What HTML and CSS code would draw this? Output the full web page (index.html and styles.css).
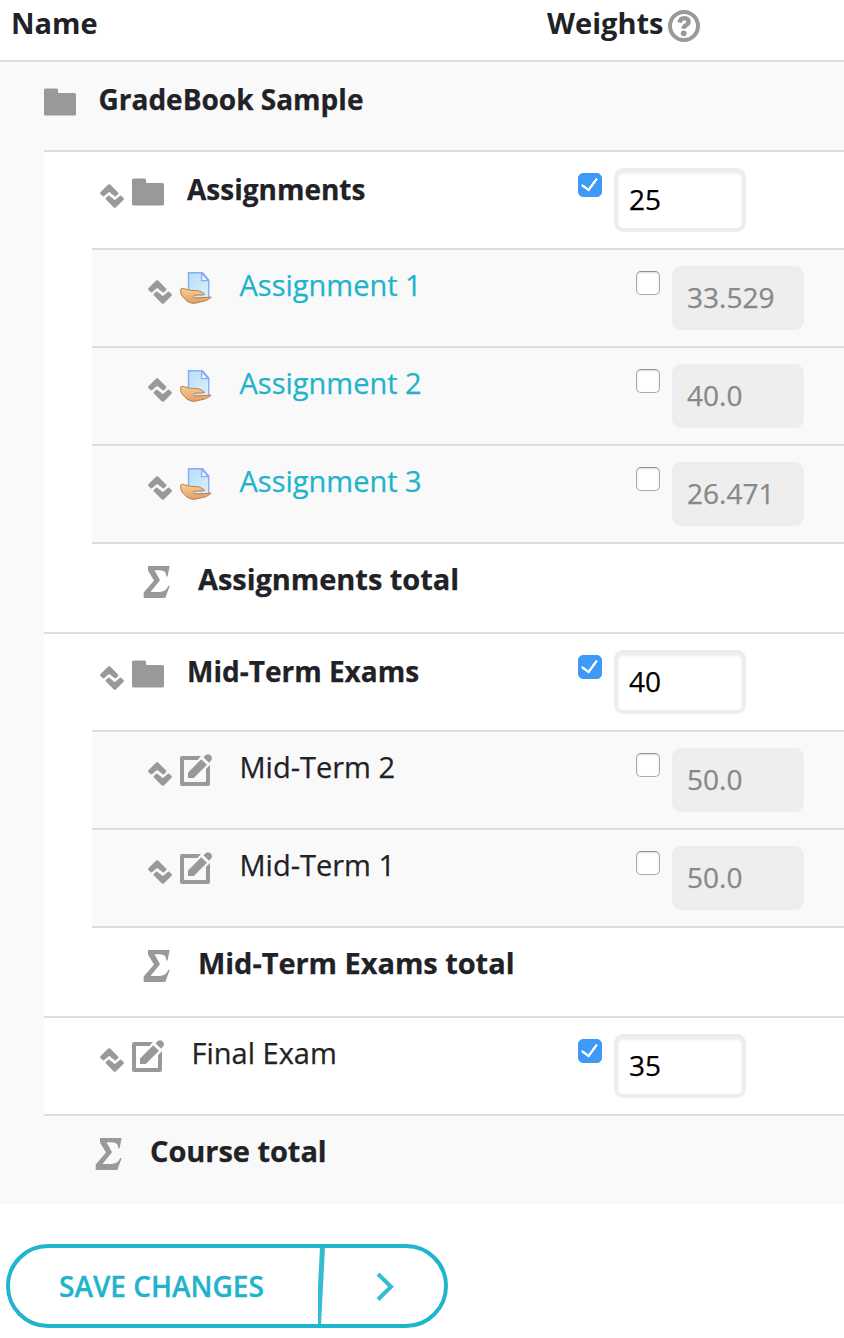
FILE: index.html
```html
<!DOCTYPE html>
<html lang="en">
<head>
<meta charset="utf-8">
<title>Gradebook setup</title>
<link rel="stylesheet" href="styles.css">
</head>
<body>
<svg class="defs" width="0" height="0" aria-hidden="true">
  <defs><linearGradient id="paper" x2="1" y2="1"><stop stop-color="#b9ddf8"/><stop offset="1" stop-color="#d9f1fe"/></linearGradient><linearGradient id="skin" x2="0" y2="1"><stop stop-color="#f8cd99"/><stop offset="1" stop-color="#dea066"/></linearGradient></defs>
  <symbol id="folder" viewBox="0 0 32 28"><path d="M1.500 .5H12.500Q14 .5 14 2V4Q14 5 15 5H30.500Q32 5 32 6.500V26Q32 27.500 30.500 27.500H1.500Q0 27.500 0 26V2Q0 .5 1.500 .5Z"/></symbol>
  <symbol id="move" viewBox="0 0 24 24"><path d="M8.200 .6Q9.200-.3 10.200.6L18.300 8.700Q18.800 9.400 18.200 10.100L16.200 12.100Q15.300 12.800 14.300 12L10 8.400Q9.200 7.700 8.400 8.400L4.400 12Q3.400 12.800 2.500 12L.4 9.900Q-.3 9 .4 8.200Z"/><path d="M15.800 23.400Q14.800 24.300 13.800 23.400L5.700 15.300Q5.200 14.600 5.800 13.900L7.800 11.900Q8.700 11.200 9.700 12L14 15.600Q14.800 16.300 15.600 15.600L19.600 12Q20.600 11.200 21.500 12L23.600 14.100Q24.300 15 23.600 15.800Z"/></symbol>
  <symbol id="edit" viewBox="0 0 32 32"><path d="M2 2H21L17.500 6H5Q4 6 4 7V27Q4 28 5 28H25Q26 28 26 27V15L30 11V30Q30 32 28 32H2Q0 32 0 30V4Q0 2 2 2Z"/><path d="M8 18.500 21.300 5.200 27 10.800 13.800 24H8Z"/><path d="M23.400 3.200 26.200.8Q28-.6 30.500 1.300 33 4 31.200 6.200L29 8.700Z"/></symbol>
  <symbol id="sigma" viewBox="0 0 32 32"><path d="M8 0H29.700L27.500 10.400H26.300Q26.500 4.400 20 4.300H14.500L20 14.200 10.500 26H19.500Q25.500 25.900 28.300 20H29.700L25.300 32H3.700V26.500L14 14.500 8 4.500Z"/></symbol>
  <symbol id="submission" viewBox="0 0 32 32"><path d="M8.500 .7H22.500L28.700 8V26H8.500Z" fill="url(#paper)" stroke="#84aef5" stroke-width="1.400"/><path d="M21.600 1V8.700H28.400Z" fill="#edf8ff" stroke="#84aef5" stroke-width="1.300"/><path d="M.7 17Q2 15.800 4.500 16.800L10.500 18.300 18 18.700Q24 20.600 24.700 22.300 23.500 23.400 17 23.100 13.300 23.200 13 24.500 13.300 25.800 17.500 26.100L31.200 25.100Q29.500 27.500 24 29.200L14 31.400Q11 31.400 7 29.200L2 24Q.2 21.500 .7 17Z" fill="url(#skin)" stroke="#bd8047" stroke-width="1"/></symbol>
  <symbol id="help" viewBox="0 0 32 32"><circle cx="16" cy="16" r="14" fill="none" stroke="currentColor" stroke-width="4"/><path d="M11.600 12.600Q12.200 8.100 16.200 8.100 20.700 8.300 20.600 12 20.400 14 17.700 15.500 15.700 16.500 15.700 18.700" fill="none" stroke="currentColor" stroke-width="4.400"/><circle cx="15.700" cy="23.300" r="2.900"/></symbol>
</svg>

<header class="head">
  <span class="head-name">Name</span>
  <span class="head-weights">Weights</span>
  <svg class="icon help"><use href="#help"/></svg>
</header>

<main class="course">
  <div class="row short course-row">
    <svg class="icon folder"><use href="#folder"/></svg><strong class="label">GradeBook Sample</strong>
  </div>
  <div class="children">
    <section class="category">
      <div class="row parent">
        <svg class="icon move"><use href="#move"/></svg><svg class="icon folder"><use href="#folder"/></svg><strong class="label">Assignments</strong>
        <span class="weights"><input class="check" type="checkbox" checked><input class="value" value="25"></span>
      </div>
      <div class="items">
        <div class="row item"><svg class="icon move"><use href="#move"/></svg><svg class="icon"><use href="#submission"/></svg><a class="label link">Assignment 1</a><span class="weights"><input class="check" type="checkbox"><input class="value" value="33.529" disabled></span></div>
        <div class="row item"><svg class="icon move"><use href="#move"/></svg><svg class="icon"><use href="#submission"/></svg><a class="label link">Assignment 2</a><span class="weights"><input class="check" type="checkbox"><input class="value" value="40.0" disabled></span></div>
        <div class="row item"><svg class="icon move"><use href="#move"/></svg><svg class="icon"><use href="#submission"/></svg><a class="label link">Assignment 3</a><span class="weights"><input class="check" type="checkbox"><input class="value" value="26.471" disabled></span></div>
        <div class="row short total"><svg class="icon"><use href="#sigma"/></svg><strong class="label">Assignments total</strong></div>
      </div>
    </section>
    <section class="category">
      <div class="row parent">
        <svg class="icon move"><use href="#move"/></svg><svg class="icon folder"><use href="#folder"/></svg><strong class="label">Mid-Term Exams</strong>
        <span class="weights"><input class="check" type="checkbox" checked><input class="value" value="40"></span>
      </div>
      <div class="items">
        <div class="row item"><svg class="icon move"><use href="#move"/></svg><svg class="icon"><use href="#edit"/></svg><span class="label">Mid-Term 2</span><span class="weights"><input class="check" type="checkbox"><input class="value" value="50.0" disabled></span></div>
        <div class="row item"><svg class="icon move"><use href="#move"/></svg><svg class="icon"><use href="#edit"/></svg><span class="label">Mid-Term 1</span><span class="weights"><input class="check" type="checkbox"><input class="value" value="50.0" disabled></span></div>
        <div class="row short total"><svg class="icon"><use href="#sigma"/></svg><strong class="label">Mid-Term Exams total</strong></div>
      </div>
    </section>
    <div class="row exam"><svg class="icon move"><use href="#move"/></svg><svg class="icon"><use href="#edit"/></svg><span class="label">Final Exam</span><span class="weights"><input class="check" type="checkbox" checked><input class="value" value="35"></span></div>
    <div class="row short total course-total"><svg class="icon"><use href="#sigma"/></svg><strong class="label">Course total</strong></div>
  </div>
</main>

<button class="save">
  <span class="save-text">SAVE CHANGES</span>
  <svg class="save-arrow" viewBox="0 0 120 76"><path d="M4.500-1 .5 77" stroke-width="5"/><path d="M60 26 73 38.700 60 51.500" stroke-width="4"/></svg>
</button>
</body>
</html>
```
FILE: styles.css
```css
* { box-sizing: border-box; }
body {
  margin: 0;
  background: #fff;
  color: #1f2226;
  font: 29px/40px "Open Sans", sans-serif;
}
.defs { position: absolute; }
.icon {
  flex: none;
  width: 32px;
  height: 32px;
  margin-top: 22px;
  fill: #999;
  color: #999;
}
.head {
  display: flex;
  height: 60px;
  padding: 3px 0 0 11px;
  font-weight: 700;
}
.head-name { width: 536px; }
.head-weights { width: 116px; white-space: nowrap; }
.head .help { margin: 7px 0 0 5px; }

.course { background: #f9f9f9; }
.children { margin-left: 44px; background: #fff; }
.items { margin-left: 48px; }
.row {
  display: flex;
  align-items: flex-start;
  height: 98px;
  border-top: 2px solid #ddd;
}
.short { height: 90px; }
.course-row { padding-left: 44px; }
.parent, .exam, .item { padding-left: 56px; }
.item, .course-total { background: #f9f9f9; }
.items .total, .course-total { padding-left: 48px; }

.folder { height: 28px; margin-top: 26px; }
.move { width: 24px; height: 24px; margin: 30px 8px 0 0; }
.parent .move { margin-top: 32px; }
.label {
  flex: 1;
  margin: 15px 0 0 27.5px;
  white-space: nowrap;
  -webkit-text-stroke: .25px;
}
.parent .label, .course-row .label { margin: 17px 0 0 23px; font-size: 28px; }
.course-row .label { margin-left: 22.500px; }
.total .label { margin-left: 26px; letter-spacing: -.05px; }
.link { color: #21b3cc; }

.weights { display: flex; flex: none; width: 266px; align-items: flex-start; }
.item .weights { width: 208px; }
.check {
  appearance: none;
  width: 24px;
  height: 24px;
  margin: 21px 12px 0 0;
  border: 1px solid #aaa;
  border-top-color: #929292;
  border-radius: 5px;
  background: #fff;
  box-shadow: inset 0 1px 2px #ddd;
}
.check:checked {
  display: grid;
  place-items: center;
  border-color: #3f99f8;
  background: #3f99f8;
  box-shadow: none;
}
.check:checked::before {
  content: "";
  width: 7.5px;
  height: 14px;
  margin: -5px 0 0 -1px;
  border: solid #fff;
  border-width: 0 2.600px 2.600px 0;
  border-width: 0 3px 3px 0;
  border-radius: 1px;
  transform: rotate(36deg) scale(.92);
}
.value {
  width: 132px;
  height: 64px;
  margin-top: 16px;
  padding: 0 11px 2px;
  border: 4px solid #eaedf2;
  border-radius: 9px;
  background: #fff;
  box-shadow: inset 0 2px 3px #eee;
  color: #000;
  font: 28px "Open Sans", sans-serif;
  -webkit-text-stroke: .25px;
}
.value:disabled { background: #eee; color: #888; box-shadow: none; }

.save {
  display: flex;
  justify-content: space-between;
  align-items: center;
  width: 442px;
  height: 84px;
  margin: 40px 0 0 6px;
  padding: 0 4px 0 49px;
  border: 4px solid #21b5cc;
  border-radius: 42px;
  background: #fff;
  color: #21b3cc;
  font: 600 28px/40px "Open Sans", sans-serif;
}
.save-text { margin-bottom: 1px; white-space: nowrap; -webkit-text-stroke: .3px; }
.save-arrow { width: 120px; height: 76px; margin-right: 2px; fill: none; stroke: #21b5cc; opacity: .9; }
```
